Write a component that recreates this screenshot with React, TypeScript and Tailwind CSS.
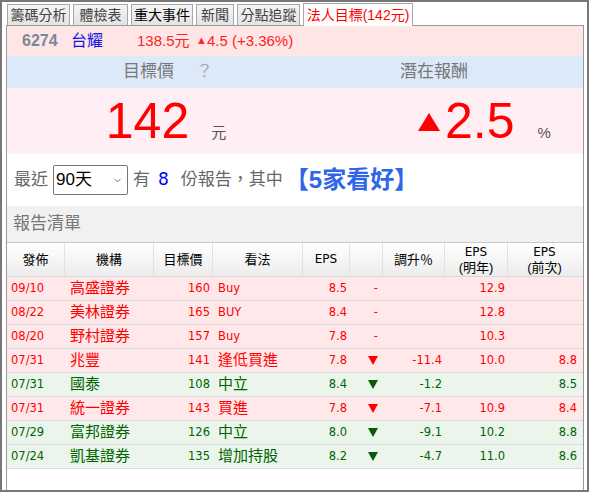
import { ChevronDown } from 'lucide-react';

const CJK = "font-['Liberation_Sans','Noto_Sans_CJK_TC',sans-serif]";
const NUM = "font-['DejaVu_Sans','Noto_Sans_CJK_TC',sans-serif]";

const TABS = [
  { label: '籌碼分析', w: 'w-[63px]' },
  { label: '體檢表', w: 'w-[55px]' },
  { label: '重大事件', w: 'w-[62px]', dark: true },
  { label: '新聞', w: 'w-[38px]' },
  { label: '分點追蹤', w: 'w-[63px]' },
];

type Row = {
  date: string;
  org: string;
  target: string;
  view: string;
  cjkView?: boolean;
  eps: string;
  down: boolean;
  pct: string;
  next: string;
  prev: string;
  up: boolean;
};

const ROWS: Row[] = [
  { date: '09/10', org: '高盛證券', target: '160', view: 'Buy', eps: '8.5', down: false, pct: '', next: '12.9', prev: '', up: true },
  { date: '08/22', org: '美林證券', target: '165', view: 'BUY', eps: '8.4', down: false, pct: '', next: '12.8', prev: '', up: true },
  { date: '08/20', org: '野村證券', target: '157', view: 'Buy', eps: '7.8', down: false, pct: '', next: '10.3', prev: '', up: true },
  { date: '07/31', org: '兆豐', target: '141', view: '逢低買進', cjkView: true, eps: '7.8', down: true, pct: '-11.4', next: '10.0', prev: '8.8', up: true },
  { date: '07/31', org: '國泰', target: '108', view: '中立', cjkView: true, eps: '8.4', down: true, pct: '-1.2', next: '', prev: '8.5', up: false },
  { date: '07/31', org: '統一證券', target: '143', view: '買進', cjkView: true, eps: '7.8', down: true, pct: '-7.1', next: '10.9', prev: '8.4', up: true },
  { date: '07/29', org: '富邦證券', target: '126', view: '中立', cjkView: true, eps: '8.0', down: true, pct: '-9.1', next: '10.2', prev: '8.8', up: false },
  { date: '07/24', org: '凱基證券', target: '135', view: '增加持股', cjkView: true, eps: '8.2', down: true, pct: '-4.7', next: '11.0', prev: '8.6', up: false },
];

const COLS = 'grid grid-cols-[58px_89px_59px_90px_47px_33px_62px_63px_73px]';

function DownTri({ color }: { color: string }) {
  return (
    <svg width="10" height="9" viewBox="0 0 10 9" className="inline-block">
      <polygon points="0,0 10,0 5,9" fill={color} />
    </svg>
  );
}

function HeadCell({ children, last }: { children: React.ReactNode; last?: boolean }) {
  return (
    <div
      className={`flex flex-col items-center justify-center leading-[15px] text-[13px] text-black ${
        last ? '' : 'border-r border-[#e2e2e2]'
      }`}
    >
      {children}
    </div>
  );
}

export default function App() {
  return (
    <div className={`w-[589px] h-[492px] border-2 border-[#777] bg-white pl-[4px] pr-[3px] pt-[1px] flex flex-col ${CJK}`}>
      {/* tabs */}
      <div className="flex items-end h-[22px] gap-[3px] pl-[1px]">
        {TABS.map((t) => (
          <div
            key={t.label}
            className={`${t.w} h-[21px] flex items-center justify-center border border-b-0 border-[#a8a8a8] bg-gradient-to-b from-[#f4f4f4] to-[#e4e4e4] text-[14px] ${
              t.dark ? 'text-black' : 'text-[#444]'
            }`}
          >
            {t.label}
          </div>
        ))}
        <div className="relative z-10 w-[110px] h-[23px] -mb-px flex items-center justify-center border border-b-0 border-[#a8a8a8] bg-white text-[14px] text-[#f00]">
          法人目標(142元)
        </div>
      </div>

      {/* panel */}
      <div className="flex-1 border border-b-0 border-[#9a9a9a] flex flex-col">
        <div className="h-[30px] bg-[#ffe6e6] flex items-center text-[15px]">
          <span className="ml-[15px] w-[49px] font-bold text-[16px] text-[#7a8898]">6274</span>
          <span className="w-[66px] text-[#1414e6] text-[16px]">台耀</span>
          <span className="w-[59px] text-[#f22]">138.5元</span>
          <span className="text-[#f22]">
            <span className="text-[11px] align-[2px]">▲</span>4.5 (+3.36%)
          </span>
        </div>

        <div className="h-[32px] bg-[#dbe9f9] flex items-center text-[17px] text-[#777]">
          <div className="w-[318px] flex justify-center gap-[22px] pl-[4px]">
            <span>目標價</span>
            <span className="text-[#aaa]">？</span>
          </div>
          <div className="pl-[75px]">潛在報酬</div>
        </div>

        <div className="h-[66px] bg-[#ffeef4] flex items-center">
          <div className="w-[318px] flex justify-center items-baseline gap-[22px]">
            <span className="text-[50px] leading-none text-[#f00] font-['Liberation_Sans',sans-serif]">142</span>
            <span className="text-[15px] text-[#555]">元</span>
          </div>
          <div className="pl-[93px] flex items-baseline">
            <svg width="22" height="18" viewBox="0 0 22 18" className="mr-[5px] self-center mt-[2px]">
              <polygon points="11,0 22,18 0,18" fill="#f00" />
            </svg>
            <span className="text-[50px] leading-none text-[#f00] font-['Liberation_Sans',sans-serif]">2.5</span>
            <span className="ml-[23px] text-[15px] text-[#555]">%</span>
          </div>
        </div>

        <div className="h-[52px] flex items-center text-[17px] text-[#666]">
          <span className="ml-[7px]">最近</span>
          <div className="relative ml-[5px] w-[75px] h-[30px]">
            <select
              defaultValue="90"
              className="appearance-none w-full h-full border border-[#767676] rounded-[2px] bg-white pl-[2px] text-[17px] text-black outline-none"
            >
              <option value="30">30天</option>
              <option value="90">90天</option>
              <option value="180">180天</option>
            </select>
            <ChevronDown size={11} strokeWidth={1.5} className="absolute right-[5px] top-[10px] text-[#333] pointer-events-none" />
          </div>
          <span className="ml-[5px]">有</span>
          <span className={`ml-[8px] text-[#00f] ${NUM}`}>8</span>
          <span className="ml-[12px]">份報告，其中</span>
          <span className="ml-[2px] text-[24px] font-bold text-[#2f66e8]">【5家看好】</span>
        </div>

        <div className="h-[36px] bg-[#f1f1f1] flex items-center pl-[6px] text-[17px] text-[#777]">報告清單</div>

        <div className={`${COLS} h-[35px] border-t border-[#c8c8c8] border-b border-b-[#d8d8d8] bg-gradient-to-b from-white to-[#ececec]`}>
          <HeadCell>發佈</HeadCell>
          <HeadCell>機構</HeadCell>
          <HeadCell>目標價</HeadCell>
          <HeadCell>看法</HeadCell>
          <HeadCell>
            <span className={`${NUM} text-[12px]`}>EPS</span>
          </HeadCell>
          <HeadCell> </HeadCell>
          <HeadCell>調升％</HeadCell>
          <HeadCell>
            <span className={`${NUM} text-[12px]`}>EPS</span>
            <span>(明年)</span>
          </HeadCell>
          <HeadCell last>
            <span className={`${NUM} text-[12px]`}>EPS</span>
            <span>(前次)</span>
          </HeadCell>
        </div>

        {ROWS.map((r, i) => {
          const color = r.up ? 'text-[#f00]' : 'text-[#006400]';
          const bg = r.up ? 'bg-[#ffe8ea]' : 'bg-[#ebf5eb]';
          return (
            <div key={i} className={`${COLS} h-[24px] border-b border-[#dcdcdc] ${bg} ${color} text-[11.5px] ${NUM}`}>
              <div className="flex items-center pl-[4px]">{r.date}</div>
              <div className={`flex items-center pl-[5px] text-[15px] ${CJK}`}>{r.org}</div>
              <div className="flex items-center justify-end pr-[3px]">{r.target}</div>
              <div className={`flex items-center pl-[5px] ${r.cjkView ? `text-[15px] ${CJK}` : ''}`}>{r.view}</div>
              <div className="flex items-center justify-end pr-[3px]">{r.eps}</div>
              <div className="flex items-center justify-end pr-[5px]">
                {r.down ? <DownTri color={r.up ? '#f00' : '#0a5a0a'} /> : '-'}
              </div>
              <div className="flex items-center justify-end pr-[3px]">{r.pct}</div>
              <div className="flex items-center justify-end pr-[3px]">{r.next}</div>
              <div className="flex items-center justify-end pr-[4px]">{r.prev}</div>
            </div>
          );
        })}
      </div>
    </div>
  );
}
